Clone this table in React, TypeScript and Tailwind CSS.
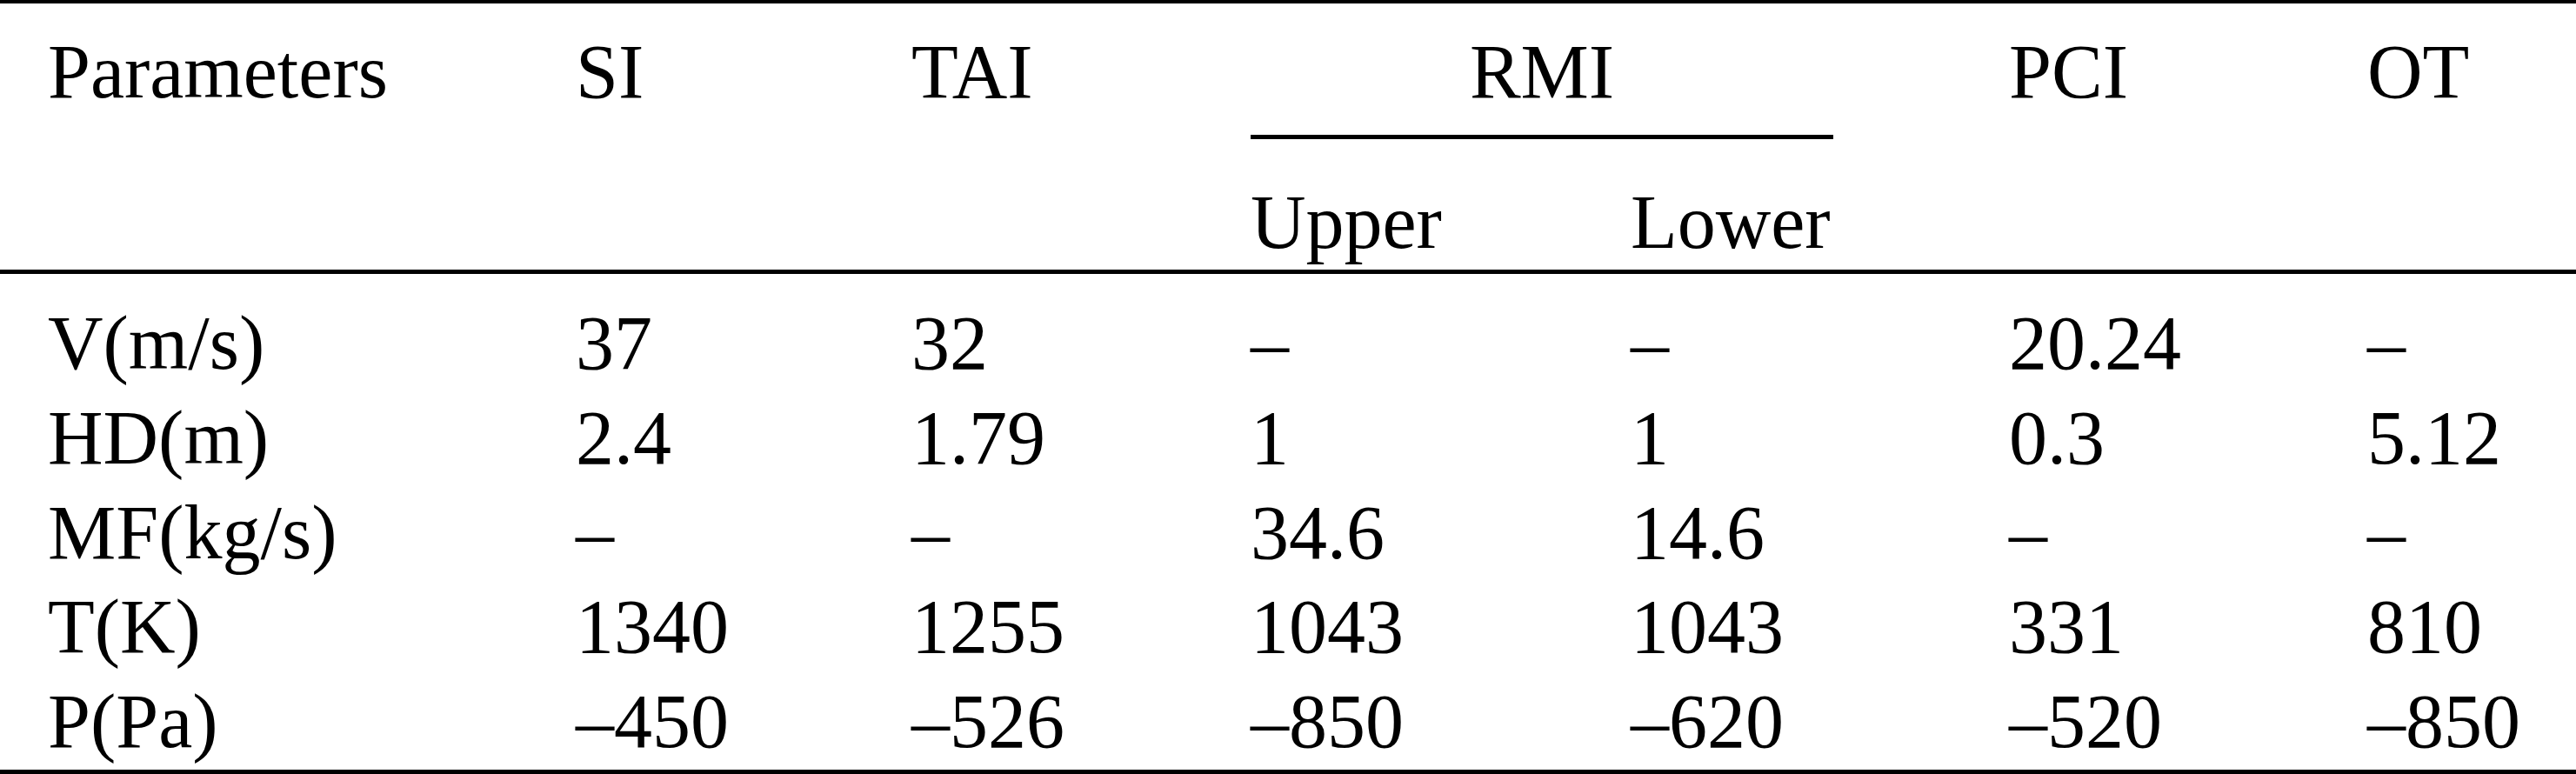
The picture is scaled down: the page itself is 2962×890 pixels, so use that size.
const rows: [string, string[]][] = [
  ['V(m/s)', ['37', '32', '–', '–', '20.24', '–']],
  ['HD(m)', ['2.4', '1.79', '1', '1', '0.3', '5.12']],
  ['MF(kg/s)', ['–', '–', '34.6', '14.6', '–', '–']],
  ['T(K)', ['1340', '1255', '1043', '1043', '331', '810']],
  ['P(Pa)', ['–450', '–526', '–850', '–620', '–520', '–850']],
];

const cols = 'grid grid-cols-[607px_386px_390px_437px_435px_412px_1fr] pl-[55px]';

export default function App() {
  return (
    <div className="w-[2962px] bg-white text-black font-[family-name:'Liberation_Serif',serif] text-[88px] leading-[100px] whitespace-nowrap">
      {/* header */}
      <div className={`${cols} grid-rows-[156px_150px] border-t-[4px] border-b-[5px] border-black`}>
        <div className="row-span-2 pt-[29px]">Parameters</div>
        <div className="row-span-2 pt-[29px]">SI</div>
        <div className="row-span-2 pt-[29px]">TAI</div>
        <div className="col-span-2">
          <div className="w-[670px] border-b-[5px] border-black pt-[29px] pb-[22px] text-center">RMI</div>
        </div>
        <div className="row-span-2 pt-[29px]">PCI</div>
        <div className="row-span-2 pt-[29px]">OT</div>
        <div className="col-start-4 row-start-2 pt-[46px]">Upper</div>
        <div className="col-start-5 row-start-2 pt-[46px]">Lower</div>
      </div>

      {/* body */}
      <div className="pt-[26px] border-b-[5px] border-black leading-[108.75px]">
        {rows.map(([name, vals]) => (
          <div key={name} className={cols}>
            <div>{name}</div>
            {vals.map((v, i) => (
              <div key={i}>{v}</div>
            ))}
          </div>
        ))}
      </div>
    </div>
  );
}
